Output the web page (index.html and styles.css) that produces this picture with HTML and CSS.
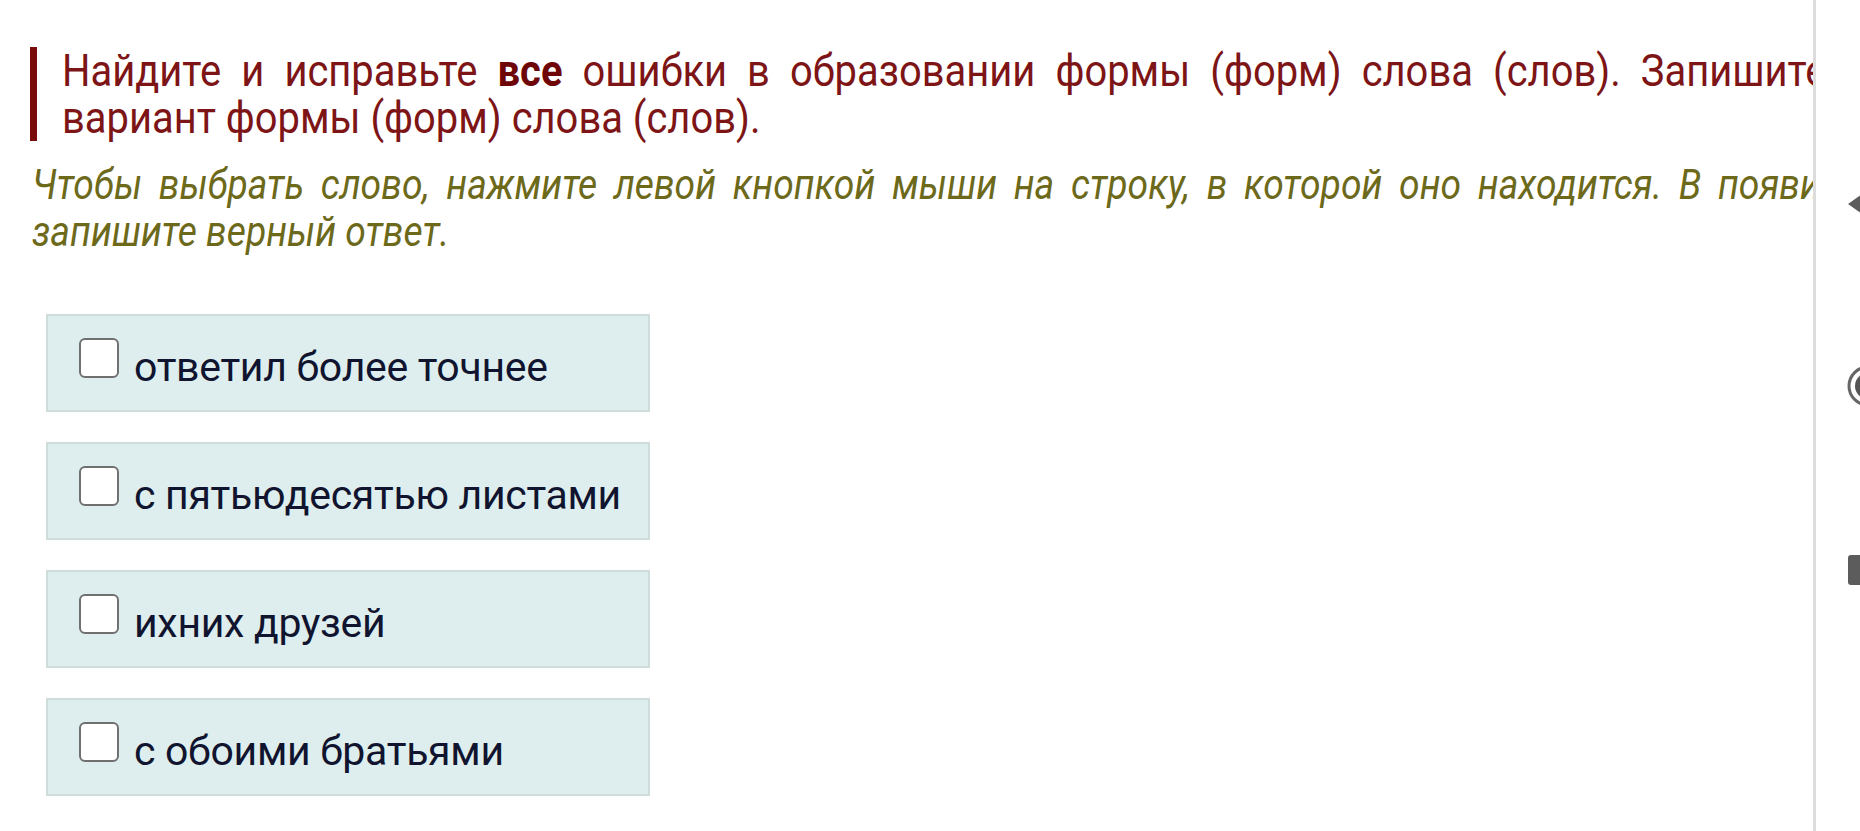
FILE: index.html
```html
<!DOCTYPE html>
<html lang="ru">

<head>
    <meta charset="UTF-8">
    <meta name="viewport" content="width=device-width, initial-scale=1.0">
    <title>Задание</title>
    <link rel="stylesheet" href="styles.css">
</head>

<body>
    <div class="page">
        <div class="task">
            <div class="question">
                <span class="line wide">Найдите и исправьте <b>все</b> ошибки в образовании формы (форм) слова (слов). Запишите правильный</span>
                <span class="line">вариант формы (форм) слова (слов).</span>
            </div>
            <div class="hint">
                <span class="line spaced">Чтобы выбрать слово, нажмите левой кнопкой мыши на строку, в которой оно находится. В появившемся поле</span>
                <span class="line">запишите верный ответ.</span>
            </div>

            <div class="options">
                <label class="option"><span class="box"></span><span class="option-text">ответил более точнее</span></label>
                <label class="option"><span class="box"></span><span class="option-text">с пятьюдесятью листами</span></label>
                <label class="option"><span class="box"></span><span class="option-text">ихних друзей</span></label>
                <label class="option"><span class="box"></span><span class="option-text">с обоими братьями</span></label>
            </div>
        </div>

        <div class="side">
            <svg class="side-arrow" width="16" height="24" viewBox="0 0 16 24">
                <path d="M2 12 L16 2 L16 22 Z" fill="#5c5c5c" />
            </svg>
            <svg class="side-ring" width="44" height="44" viewBox="0 0 44 44">
                <circle cx="22" cy="22" r="19" fill="none" stroke="#666" stroke-width="3" />
                <circle cx="22" cy="22" r="13" fill="#555" />
            </svg>
            <div class="side-tab"></div>
        </div>
    </div>
</body>

</html>
```

FILE: styles.css
```css
body {
    margin: 0;
    padding: 0;
    background-color: #ffffff;
    font-family: Roboto, "Noto Sans", Arial, sans-serif;
}

.page {
    display: flex;
    height: 831px;
    overflow: hidden;
}

.task {
    width: 1813px;
    flex-shrink: 0;
    overflow: hidden;
    padding-top: 47px;
    border-right: 3px solid #dcdcdc;
}

/* condensed look for the heading and the hint */
.line {
    display: block;
    white-space: nowrap;
    transform-origin: 0 0;
    transform: scaleX(0.887);
}

.question {
    margin-left: 30px;
    padding-left: 25px;
    border-left: 7px solid #7a0b0d;
    color: #7d1416;
    font-size: 45px;
    line-height: 47px;
}

.question b {
    color: #6e0608;
}

.wide {
    word-spacing: 11.5px;
}

.hint {
    margin: 20px 0 0 32px;
    color: #6d691b;
    font-style: italic;
    font-size: 42px;
    line-height: 47px;
}

.spaced {
    word-spacing: 8.5px;
}

.options {
    display: flex;
    flex-direction: column;
    gap: 30px;
    margin: 59px 0 0 46px;
    width: 604px;
}

.option {
    display: flex;
    align-items: flex-start;
    box-sizing: border-box;
    height: 98px;
    padding-left: 31px;
    background-color: #deeeee;
    border: 2px solid #cfdcdc;
    color: #10142e;
    font-size: 41px;
    letter-spacing: -0.3px;
}

.box {
    width: 36px;
    height: 36px;
    margin: 22px 15px 0 0;
    background-color: #ffffff;
    border: 2px solid #707070;
    border-radius: 6px;
    flex-shrink: 0;
}

.option-text {
    margin-top: 27px;
    line-height: 48px;
}

.side {
    position: relative;
    flex: 1;
}

.side-arrow {
    position: absolute;
    left: 30px;
    top: 192px;
}

.side-ring {
    position: absolute;
    left: 30px;
    top: 364px;
}

.side-tab {
    position: absolute;
    left: 32px;
    top: 555px;
    width: 20px;
    height: 30px;
    background-color: #5c5c5c;
    border-radius: 3px;
}
```
